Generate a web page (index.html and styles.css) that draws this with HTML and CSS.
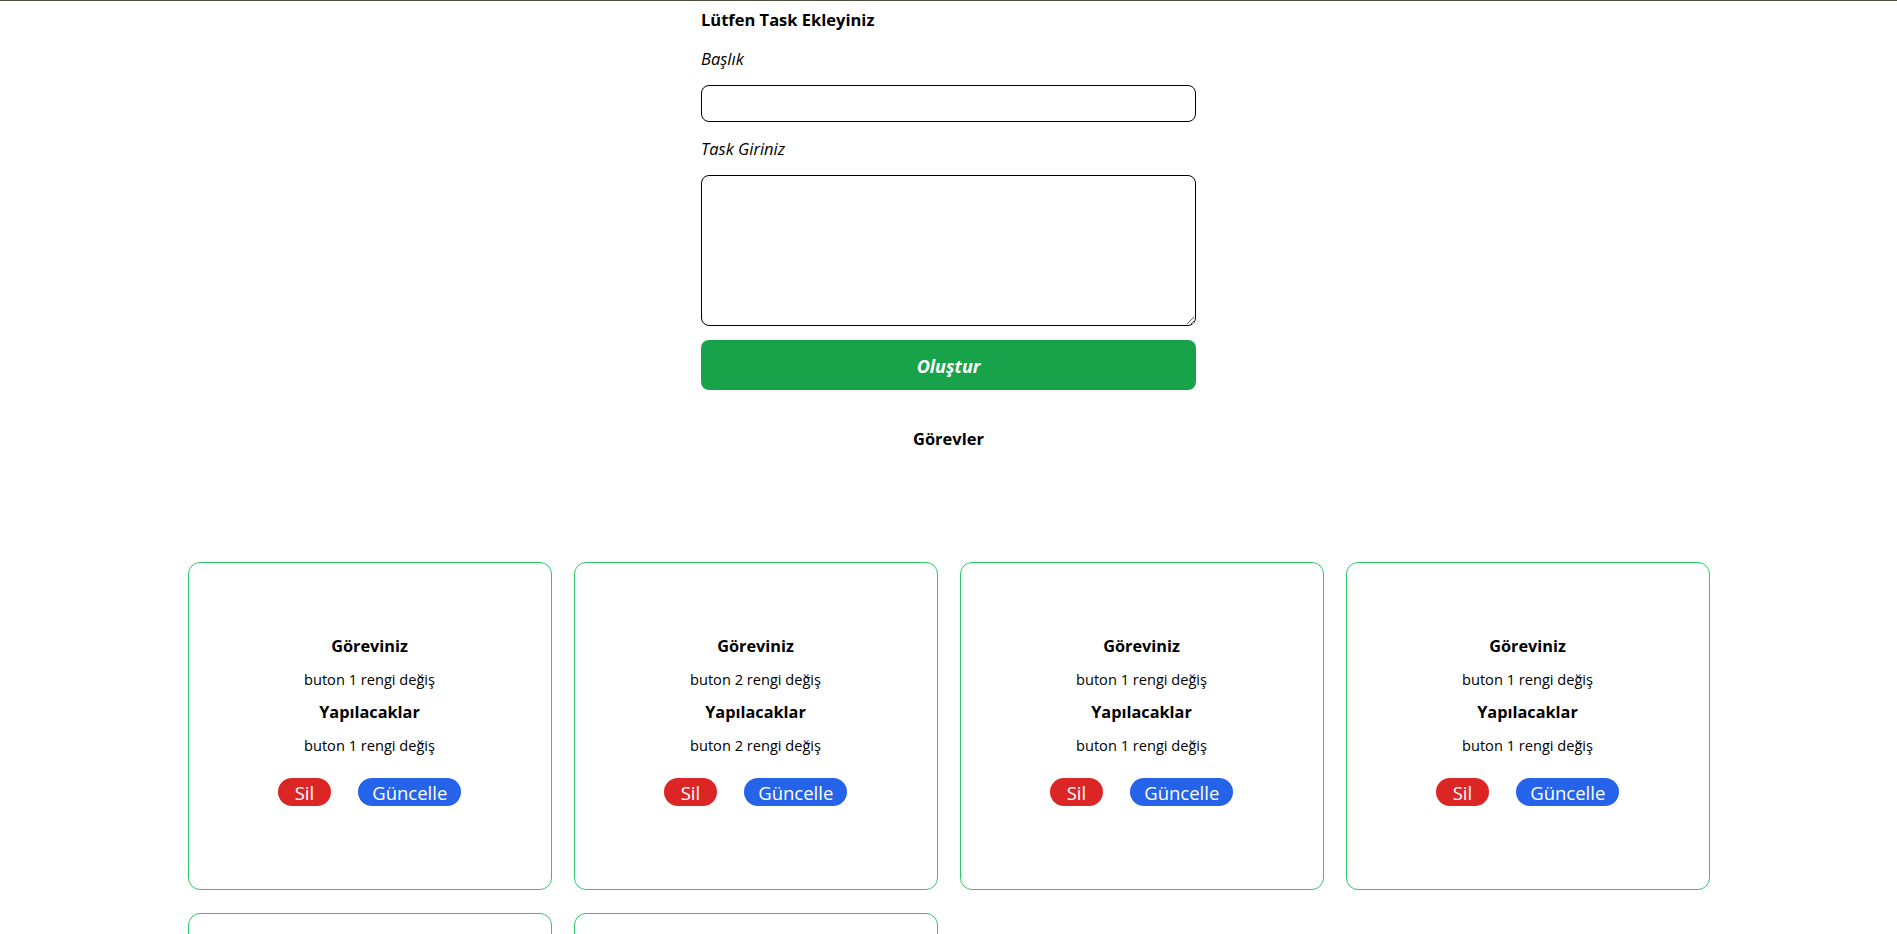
FILE: index.html
```html
<!DOCTYPE html>
<html lang="tr">
<head>
<meta charset="utf-8">
<title>Task</title>
<link rel="stylesheet" href="styles.css">
</head>
<body>
<div class="page">
  <form class="task-form">
    <h1 class="form-title">Lütfen Task Ekleyiniz</h1>
    <label class="field-label" for="baslik">Başlık</label>
    <input class="field-input" id="baslik" type="text">
    <label class="field-label field-label-2" for="task">Task Giriniz</label>
    <textarea class="field-textarea" id="task"></textarea>
    <button class="create-btn" type="button">Oluştur</button>
  </form>
  <h2 class="list-title">Görevler</h2>
  <div class="card-grid">
    <div class="card">
      <h3 class="card-heading">Göreviniz</h3>
      <p class="card-text">buton 1 rengi değiş</p>
      <h3 class="card-heading">Yapılacaklar</h3>
      <p class="card-text">buton 1 rengi değiş</p>
      <div class="card-actions"><button class="btn btn-del" type="button">Sil</button><button class="btn btn-upd" type="button">Güncelle</button></div>
    </div>
    <div class="card">
      <h3 class="card-heading">Göreviniz</h3>
      <p class="card-text">buton 2 rengi değiş</p>
      <h3 class="card-heading">Yapılacaklar</h3>
      <p class="card-text">buton 2 rengi değiş</p>
      <div class="card-actions"><button class="btn btn-del" type="button">Sil</button><button class="btn btn-upd" type="button">Güncelle</button></div>
    </div>
    <div class="card">
      <h3 class="card-heading">Göreviniz</h3>
      <p class="card-text">buton 1 rengi değiş</p>
      <h3 class="card-heading">Yapılacaklar</h3>
      <p class="card-text">buton 1 rengi değiş</p>
      <div class="card-actions"><button class="btn btn-del" type="button">Sil</button><button class="btn btn-upd" type="button">Güncelle</button></div>
    </div>
    <div class="card">
      <h3 class="card-heading">Göreviniz</h3>
      <p class="card-text">buton 1 rengi değiş</p>
      <h3 class="card-heading">Yapılacaklar</h3>
      <p class="card-text">buton 1 rengi değiş</p>
      <div class="card-actions"><button class="btn btn-del" type="button">Sil</button><button class="btn btn-upd" type="button">Güncelle</button></div>
    </div>
    <div class="card">
      <h3 class="card-heading">Göreviniz</h3>
      <p class="card-text">buton 3 rengi değiş</p>
      <h3 class="card-heading">Yapılacaklar</h3>
      <p class="card-text">buton 3 rengi değiş</p>
      <div class="card-actions"><button class="btn btn-del" type="button">Sil</button><button class="btn btn-upd" type="button">Güncelle</button></div>
    </div>
    <div class="card">
      <h3 class="card-heading">Göreviniz</h3>
      <p class="card-text">buton 4 rengi değiş</p>
      <h3 class="card-heading">Yapılacaklar</h3>
      <p class="card-text">buton 4 rengi değiş</p>
      <div class="card-actions"><button class="btn btn-del" type="button">Sil</button><button class="btn btn-upd" type="button">Güncelle</button></div>
    </div>
  </div>
</div>
</body>
</html>
```

FILE: styles.css
```css
* { box-sizing: border-box; }

html, body {
  margin: 0;
  padding: 0;
  background: #ffffff;
}

body {
  font-family: "Open Sans", "Noto Sans", sans-serif;
  color: #000000;
}

.page {
  border-top: 1px solid #4b4f3f;
  padding-top: 7px;
  padding-bottom: 40px;
}

.task-form {
  width: 495px;
  margin: 0 auto;
  display: flex;
  flex-direction: column;
}

.form-title {
  margin: 0 0 15px 0;
  font-size: 16.5px;
  line-height: 24px;
  font-weight: 700;
}

.field-label {
  display: block;
  font-size: 16.5px;
  line-height: 24px;
  font-style: italic;
  margin: 0 0 14px 0;
}

.field-label-2 {
  margin-top: 15px;
}

.field-input {
  display: block;
  width: 100%;
  height: 37px;
  border: 1px solid #000000;
  border-radius: 8px;
  background: #ffffff;
  padding: 0 10px;
  font-family: inherit;
  font-size: 15px;
  outline: none;
}

.field-textarea {
  display: block;
  width: 100%;
  height: 151px;
  border: 1px solid #000000;
  border-radius: 8px;
  background: #ffffff;
  padding: 8px 10px;
  font-family: inherit;
  font-size: 15px;
  resize: both;
  outline: none;
  margin: 0;
}

.create-btn {
  margin-top: 14px;
  height: 50px;
  width: 100%;
  border: none;
  border-radius: 8px;
  background: #18a34a;
  color: #ffffff;
  font-family: inherit;
  font-size: 18px;
  font-weight: 700;
  font-style: italic;
  line-height: 48px;
  padding: 2px 0 0 0;
}

.list-title {
  margin: 37px 0 0 0;
  text-align: center;
  font-size: 16.5px;
  line-height: 24px;
  font-weight: 700;
}

.card-grid {
  margin-top: 111px;
  display: grid;
  grid-template-columns: repeat(4, 364px);
  column-gap: 22px;
  row-gap: 23px;
  justify-content: center;
}

.card {
  height: 328px;
  border: 1px solid #2ec866;
  border-radius: 12px;
  padding-top: 67px;
  display: flex;
  flex-direction: column;
  align-items: center;
  text-align: center;
}

.card-heading {
  margin: 0;
  font-size: 16.3px;
  line-height: 33px;
  font-weight: 700;
}

.card-text {
  margin: 0;
  font-size: 14.6px;
  line-height: 33px;
}

.card-actions {
  margin-top: 16px;
  display: flex;
  gap: 27px;
  justify-content: center;
}

.btn {
  height: 28px;
  border: none;
  border-radius: 14px;
  color: #ffffff;
  font-family: inherit;
  font-size: 18.5px;
  line-height: 26px;
  padding: 2px 16px 0 16px;
}

.btn-del {
  background: #dc2626;
  padding: 2px 17px 0 17px;
}

.btn-upd {
  background: #2563eb;
  padding: 2px 14px 0 14px;
}
```
